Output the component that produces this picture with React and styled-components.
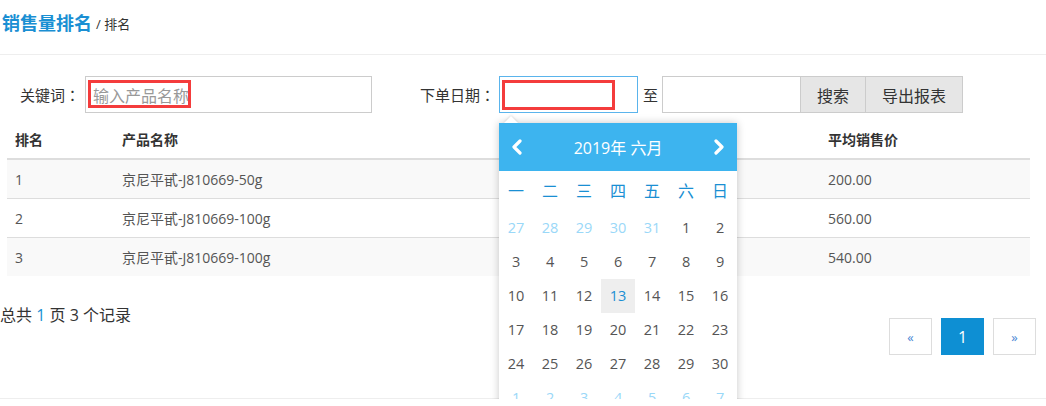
import styled, { createGlobalStyle } from "styled-components";

const GlobalStyle = createGlobalStyle`
  html, body {
    margin: 0;
    padding: 0;
    background: #fff;
    font-family: "Open Sans", "Noto Sans CJK SC", sans-serif;
    color: #333;
    overflow: hidden;
  }
`;

const Page = styled.div`
  width: 1046px;
`;

const TitleBar = styled.div`
  border-bottom: 1px solid #eee;
  padding-left: 2px;
  display: flex;
  align-items: flex-start;
  padding-top: 9px;
  box-sizing: border-box;
  height: 55px;
`;

const Title = styled.h1`
  margin: 0;
  font-size: 18px;
  font-weight: bold;
  color: #1a8fd3;
  line-height: 28px;
`;

const Crumb = styled.span`
  font-size: 13px;
  color: #333;
  margin-left: 4px;
  line-height: 30px;
`;

const SearchRow = styled.div`
  display: flex;
  align-items: center;
  margin-top: 21px;
  padding-left: 20px;
  height: 37px;
`;

const Label = styled.span`
  font-family: "Open Sans", "Noto Sans CJK TC", sans-serif;
  font-size: 15px;
  color: #333;
  margin-right: ${(p) => p.$gap || 0}px;
  margin-left: ${(p) => p.$left || 0}px;
`;

const Field = styled.div`
  position: relative;
  width: ${(p) => p.$w}px;
  height: 37px;
  box-sizing: border-box;
  border: 1px solid ${(p) => (p.$focus ? "#5ab4ec" : "#ccc")};
  display: flex;
  align-items: center;
  padding-left: 7px;
  font-size: 16px;
  color: #999;
`;

const Mark = styled.span`
  position: absolute;
  left: 2px;
  top: 3px;
  width: ${(p) => p.$w}px;
  height: ${(p) => p.$h}px;
  border: 3px solid #f43c3c;
  box-sizing: border-box;
`;

const Button = styled.button`
  height: 37px;
  box-sizing: border-box;
  border: 1px solid #ccc;
  margin-left: -1px;
  background: #e6e6e6;
  color: #333;
  font-family: inherit;
  font-size: 16px;
  padding: 0 ${(p) => p.$pad}px;
  cursor: pointer;
`;

const Table = styled.table`
  margin: 7px 16px 0 7px;
  width: 1023px;
  border-collapse: collapse;
  font-size: 14px;
`;

const Th = styled.th`
  text-align: left;
  font-weight: bold;
  color: #333;
  height: 38px;
  padding: 0 8px;
  border-bottom: 2px solid #ddd;
  width: ${(p) => (p.$w ? `${p.$w}px` : "auto")};
`;

const Tr = styled.tr`
  background: ${(p) => (p.$odd ? "#f9f9f9" : "#fff")};
`;

const Td = styled.td`
  height: 38px;
  padding: 0 8px;
  border-top: 1px solid #ddd;
  color: #555;
`;

const Footer = styled.div`
  display: flex;
  justify-content: space-between;
  align-items: flex-start;
  padding-right: 10px;
  margin-top: 28px;
  border-bottom: 1px solid #eee;
  height: 94px;
`;

const Summary = styled.div`
  font-size: 16px;
  color: #333;
  line-height: 22px;
`;

const Hi = styled.span`
  color: #1a8fd3;
`;

const Pager = styled.div`
  display: flex;
  gap: 9px;
  margin-top: 14px;
`;

const PageBtn = styled.span`
  width: 43px;
  height: 37px;
  box-sizing: border-box;
  display: flex;
  align-items: center;
  justify-content: center;
  border: 1px solid ${(p) => (p.$active ? "#0e8fd3" : "#ddd")};
  background: ${(p) => (p.$active ? "#0e8fd3" : "#fff")};
  color: ${(p) => (p.$active ? "#fff" : "#4a87d4")};
  font-size: ${(p) => (p.$active ? 16 : 13)}px;
`;

const Picker = styled.div`
  position: absolute;
  left: -1px;
  top: 46px;
  width: 238px;
  background: #fff;
  box-shadow: 0 0 8px rgba(0, 0, 0, 0.22);
  z-index: 10;
  font-size: 15px;
`;

const Arrow = styled.span`
  position: absolute;
  left: 5px;
  top: -7px;
  width: 0;
  height: 0;
  border-left: 7px solid transparent;
  border-right: 7px solid transparent;
  border-bottom: 7px solid #fff;
  filter: drop-shadow(0 -1px 1px rgba(0, 0, 0, 0.12));
`;

const PickerHead = styled.div`
  height: 48px;
  background: #3db4ef;
  color: #fff;
  display: flex;
  align-items: center;
  justify-content: space-between;
  padding: 0 12px;
  font-size: 16px;
`;

const Grid = styled.div`
  display: grid;
  grid-template-columns: repeat(7, 34px);
`;

const Week = styled.div`
  height: 40px;
  line-height: 40px;
  text-align: center;
  color: #1a8fd3;
  font-size: 16px;
`;

const Day = styled.div`
  height: 34px;
  line-height: 34px;
  text-align: center;
  font-size: 14.5px;
  color: ${(p) => (p.$other ? "#9ad8f8" : p.$today ? "#1a8fd3" : "#555")};
  background: ${(p) => (p.$today ? "#eee" : "transparent")};
`;

const Chevron = ({ dir }) => (
  <svg width="12" height="16" viewBox="0 0 12 16">
    <polyline
      points={dir === "left" ? "9,2 3,8 9,14" : "3,2 9,8 3,14"}
      fill="none"
      stroke="#fff"
      strokeWidth="3.2"
      strokeLinecap="round"
      strokeLinejoin="round"
    />
  </svg>
);

// the third column sits under the open date picker, so its cells stay empty
const rows = [
  { rank: 1, name: "京尼平甙-J810669-50g", price: "200.00" },
  { rank: 2, name: "京尼平甙-J810669-100g", price: "560.00" },
  { rank: 3, name: "京尼平甙-J810669-100g", price: "540.00" },
];

const weekdays = ["一", "二", "三", "四", "五", "六", "日"];

const buildDays = () => {
  const days = [];
  [27, 28, 29, 30, 31].forEach((d) => days.push({ d, other: true }));
  for (let d = 1; d <= 30; d++) days.push({ d });
  for (let d = 1; d <= 7; d++) days.push({ d, other: true });
  return days;
};

const App = () => {
  const days = buildDays();
  return (
    <Page>
      <GlobalStyle />
      <TitleBar>
        <Title>销售量排名</Title>
        <Crumb>/ 排名</Crumb>
      </TitleBar>

      <SearchRow>
        <Label $gap={5}>关键词：</Label>
        <Field $w={287}>
          输入产品名称
          <Mark $w={103} $h={28} />
        </Field>
        <Label $left={48} $gap={4}>下单日期：</Label>
        <Field $w={139} $focus>
          <Mark $w={113} $h={30} />
          <Picker>
            <Arrow />
            <PickerHead>
              <Chevron dir="left" />
              <span>2019年 六月</span>
              <Chevron dir="right" />
            </PickerHead>
            <Grid>
              {weekdays.map((w) => (
                <Week key={w}>{w}</Week>
              ))}
              {days.map((x, i) => (
                <Day key={i} $other={x.other} $today={!x.other && x.d === 13}>
                  {x.d}
                </Day>
              ))}
            </Grid>
          </Picker>
        </Field>
        <Label $left={5} $gap={4}>至</Label>
        <Field $w={139} />
        <Button $pad={16}>搜索</Button>
        <Button $pad={16}>导出报表</Button>
      </SearchRow>

      <Table>
        <thead>
          <tr>
            <Th $w={91}>排名</Th>
            <Th $w={380}>产品名称</Th>
            <Th $w={294}></Th>
            <Th>平均销售价</Th>
          </tr>
        </thead>
        <tbody>
          {rows.map((r, i) => (
            <Tr key={r.rank} $odd={i % 2 === 0}>
              <Td>{r.rank}</Td>
              <Td>{r.name}</Td>
              <Td></Td>
              <Td>{r.price}</Td>
            </Tr>
          ))}
        </tbody>
      </Table>

      <Footer>
        <Summary>
          总共 <Hi>1</Hi> 页 3 个记录
        </Summary>
        <Pager>
          <PageBtn>«</PageBtn>
          <PageBtn $active>1</PageBtn>
          <PageBtn>»</PageBtn>
        </Pager>
      </Footer>
    </Page>
  );
};

export default App;
